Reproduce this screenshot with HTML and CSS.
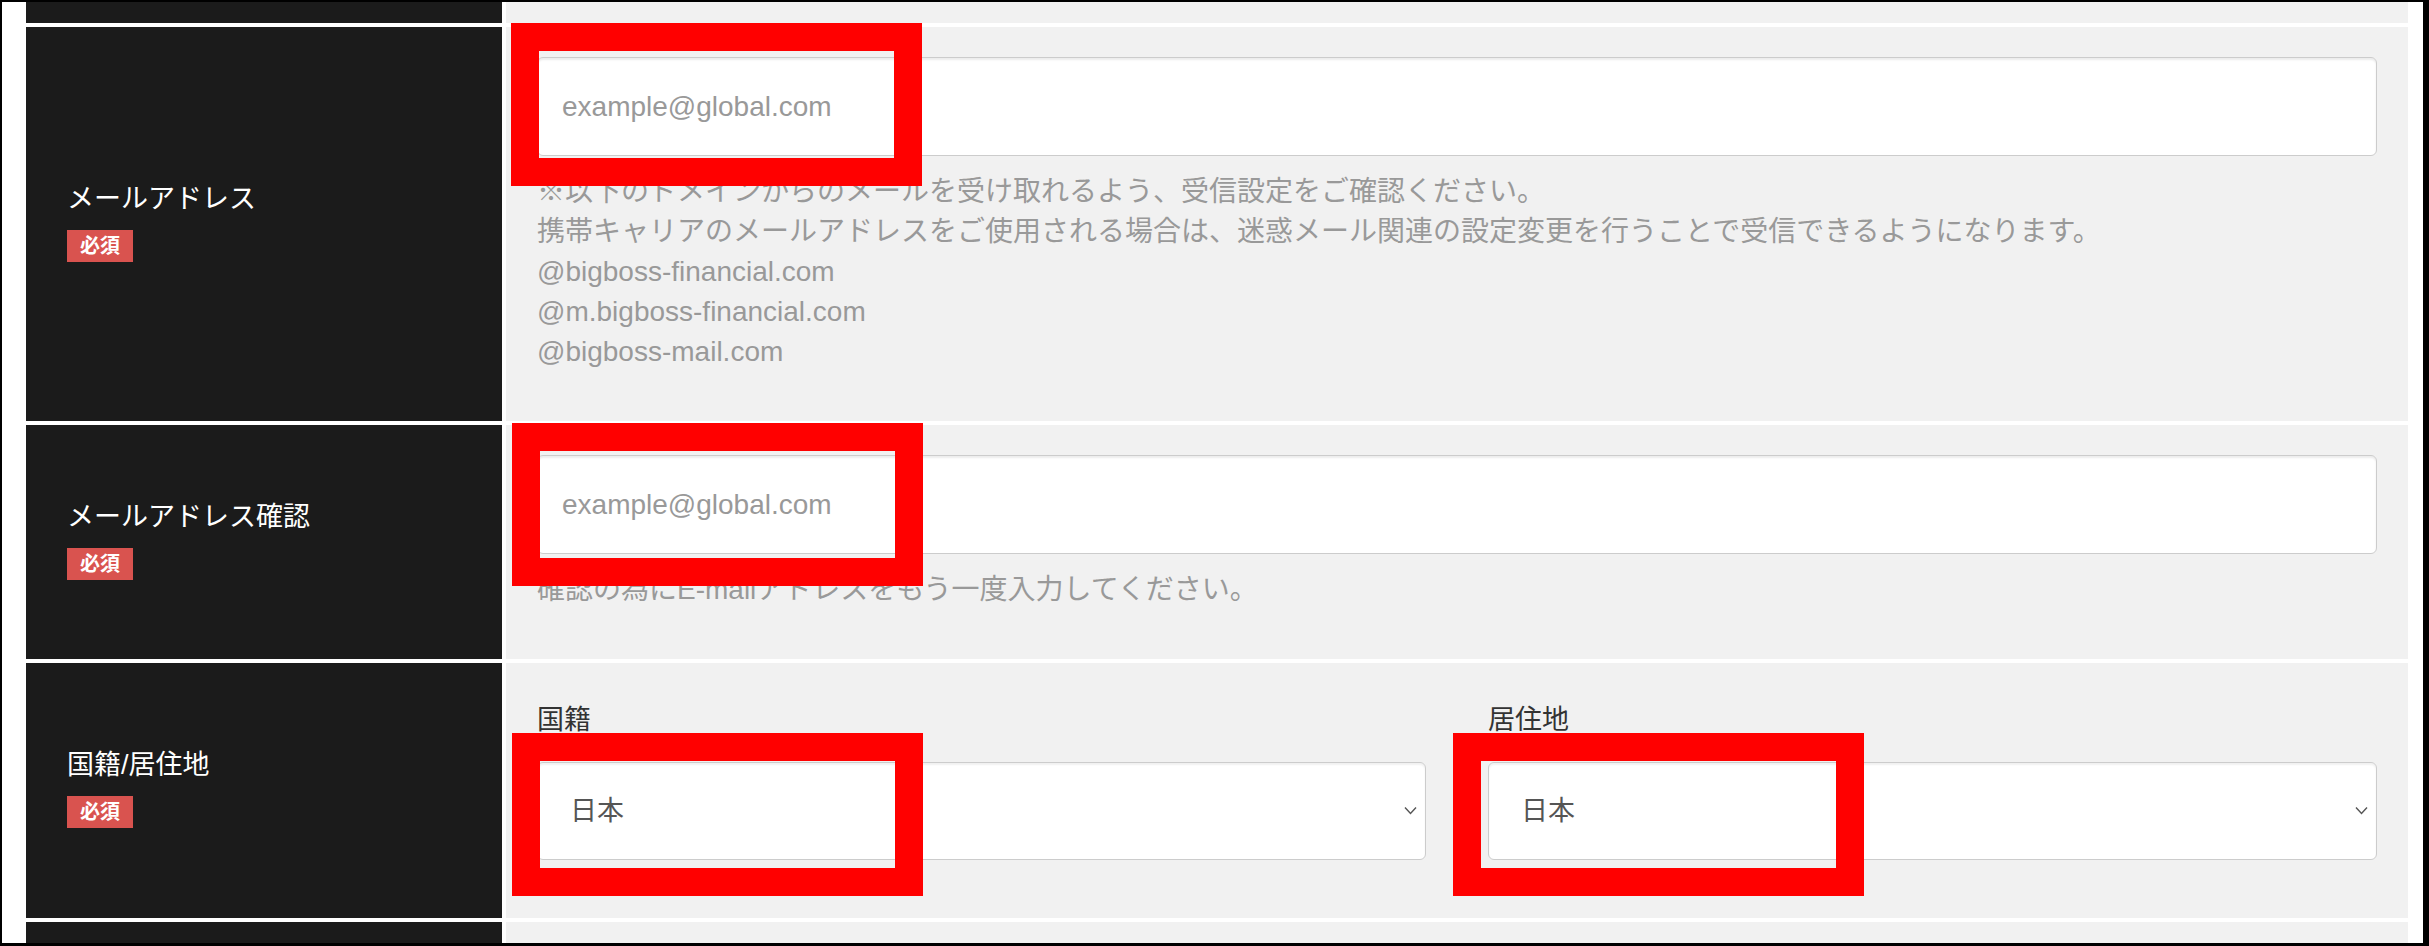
FILE: index.html
```html
<!DOCTYPE html>
<html lang="ja">

<head>
    <meta charset="UTF-8">
    <meta name="viewport" content="width=device-width, initial-scale=1.0">
    <title>口座開設フォーム</title>
    <link rel="stylesheet" href="styles.css">
</head>

<body>
    <div class="page">
        <div class="form-table">
            <!-- row cut off above -->
            <div class="form-label row-cut"></div>
            <div class="form-field row-cut"></div>

            <!-- email -->
            <div class="form-label">
                <div>
                    <p class="label-text">メールアドレス</p>
                    <span class="required">必須</span>
                </div>
            </div>
            <div class="form-field">
                <div class="control">
                    <input type="email" class="text-input" placeholder="example@global.com">
                    <span class="mark mark-email"></span>
                </div>
                <p class="hint">
                    ※以下のドメインからのメールを受け取れるよう、受信設定をご確認ください。<br>
                    携帯キャリアのメールアドレスをご使用される場合は、迷惑メール関連の設定変更を行うことで受信できるようになります。<br>
                    @bigboss-financial.com<br>
                    @m.bigboss-financial.com<br>
                    @bigboss-mail.com
                </p>
            </div>

            <!-- email confirm -->
            <div class="form-label">
                <div>
                    <p class="label-text">メールアドレス確認</p>
                    <span class="required">必須</span>
                </div>
            </div>
            <div class="form-field">
                <div class="control">
                    <input type="email" class="text-input" placeholder="example@global.com">
                    <span class="mark mark-confirm"></span>
                </div>
                <p class="hint">確認の為にE-mailアドレスをもう一度入力してください。</p>
            </div>

            <!-- nationality / residence -->
            <div class="form-label">
                <div>
                    <p class="label-text">国籍/居住地</p>
                    <span class="required">必須</span>
                </div>
            </div>
            <div class="form-field field-select">
                <div class="select-row">
                    <div>
                        <p class="sub-label">国籍</p>
                        <div class="control">
                            <select class="select-input">
                                <option>日本</option>
                            </select>
                            <svg class="chevron" width="13" height="9" viewBox="0 0 13 9">
                                <path d="M1 1.5l5.5 6 5.5-6" fill="none" stroke="#555" stroke-width="1.4" />
                            </svg>
                            <span class="mark mark-nation"></span>
                        </div>
                    </div>
                    <div>
                        <p class="sub-label">居住地</p>
                        <div class="control">
                            <select class="select-input">
                                <option>日本</option>
                            </select>
                            <svg class="chevron" width="13" height="9" viewBox="0 0 13 9">
                                <path d="M1 1.5l5.5 6 5.5-6" fill="none" stroke="#555" stroke-width="1.4" />
                            </svg>
                            <span class="mark mark-residence"></span>
                        </div>
                    </div>
                </div>
            </div>

            <!-- row cut off below -->
            <div class="form-label row-cut"></div>
            <div class="form-field row-cut"></div>
        </div>
    </div>
</body>

</html>
```

FILE: styles.css
```css
* {
    margin: 0;
    padding: 0;
    box-sizing: border-box;
}

body {
    font-family: "Liberation Sans", "Noto Sans CJK JP", sans-serif;
    background-color: #fff;
}

.page {
    height: 946px;
    overflow: hidden;
    border: solid #000;
    border-width: 2px 6px 3px 2px;
    padding: 0 15px 0 24px;
    background-color: #fff;
}

.form-table {
    display: grid;
    grid-template-columns: 476px 1fr;
    gap: 4px;
}

.form-label {
    background-color: #1b1b1b;
    color: #fff;
    display: flex;
    align-items: center;
    padding: 0 0 8px 41px;
}

.form-field {
    background-color: #f1f1f1;
    padding: 30px 31px 30px;
}

.field-select {
    padding: 37px 31px 58px;
}

.form-table .row-cut {
    height: 21px;
    padding: 0;
}

.label-text {
    font-size: 27px;
    line-height: 40px;
    margin-bottom: 11px;
}

.required {
    display: inline-block;
    background-color: #d9534f;
    color: #fff;
    font-size: 20px;
    font-weight: bold;
    line-height: 32px;
    padding: 0 13px;
}

.control {
    position: relative;
}

.text-input {
    display: block;
    width: 100%;
    height: 99px;
    padding: 0 24px;
    border: 1px solid #ccc;
    border-radius: 6px;
    box-shadow: inset 0 2px 2px rgba(0, 0, 0, 0.08);
    background-color: #fff;
    font-family: inherit;
    font-size: 28px;
    color: #555;
}

.text-input::placeholder {
    color: #999;
}

.hint {
    margin-top: 16px;
    margin-bottom: 19px;
    font-size: 28px;
    line-height: 40px;
    color: #999;
}

.select-row {
    display: grid;
    grid-template-columns: 1fr 1fr;
    gap: 62px;
}

.sub-label {
    font-size: 27px;
    line-height: 40px;
    color: #333;
    margin-bottom: 22px;
}

.select-input {
    display: block;
    width: 100%;
    height: 98px;
    padding: 0 32px;
    border: 1px solid #ccc;
    border-radius: 6px;
    box-shadow: inset 0 2px 2px rgba(0, 0, 0, 0.06);
    background-color: #fff;
    appearance: none;
    -webkit-appearance: none;
    font-family: inherit;
    font-size: 27px;
    color: #555;
}

.chevron {
    position: absolute;
    right: 9px;
    top: 44px;
    pointer-events: none;
}

/* red annotation frames */
.mark {
    position: absolute;
    width: 411px;
    height: 163px;
    border: 28px solid #f00;
    z-index: 2;
}

.mark-email {
    left: -26px;
    top: -34px;
}

.mark-confirm {
    left: -25px;
    top: -32px;
}

.mark-nation {
    left: -25px;
    top: -29px;
}

.mark-residence {
    left: -35px;
    top: -29px;
}
```
